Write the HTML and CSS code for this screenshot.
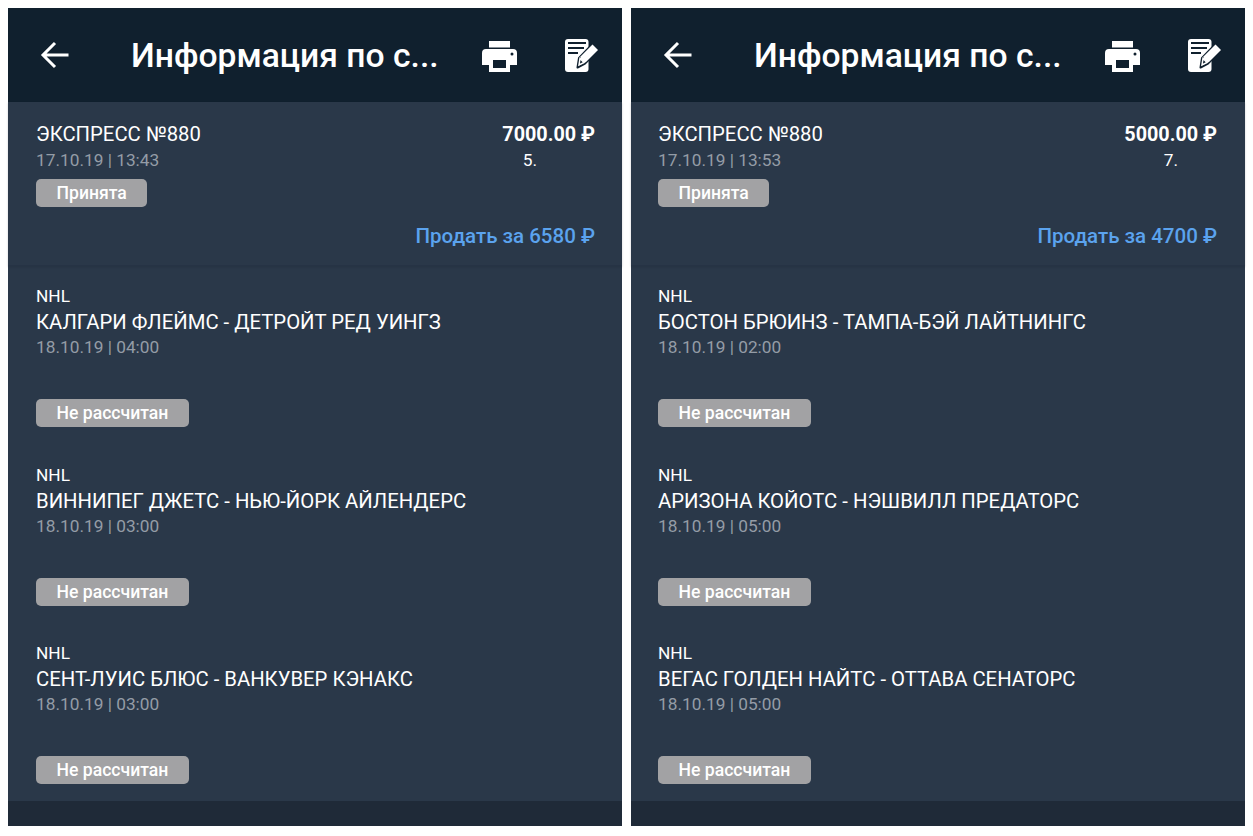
FILE: index.html
```html
<!DOCTYPE html>
<html lang="ru">
<head>
<meta charset="utf-8">
<title>Информация по ставке</title>
<link rel="stylesheet" href="styles.css">
</head>
<body>
<svg class="defs" width="0" height="0" aria-hidden="true">
  <symbol id="i-back" viewBox="0 0 30 28"><path d="M28.500 14H3M15 2 3 14l12 12" fill="none" stroke="#fff" stroke-width="3"/></symbol>
  <symbol id="i-print" viewBox="0 0 35 32"><path d="M7 1h21v6.500H7z" fill="#fff"/><path fill="#fff" fill-rule="evenodd" d="M4 9h27a4 4 0 0 1 4 4v12h-7v7H7v-7H0V13a4 4 0 0 1 4-4Zm7 11v8h13v-8Zm19-7.500a1.500 1.500 0 1 0 0 3 1.500 1.500 0 0 0 0-3Z"/></symbol>
  <symbol id="i-note" viewBox="0 0 34 34"><rect width="23.500" height="33" rx="3" fill="#fff"/><path stroke="#10202e" stroke-width="2" d="M3 4h18M3 9h16M3 14h10" fill="none"/><path d="M27.500 5 33.500 11 20 24.500 12.500 28.500l1.500-9.500Z" fill="#fff" stroke="#10202e" stroke-width="2" stroke-linejoin="round"/><path d="M27.500 5.500 33 11 20.500 23.500 15 18Z" fill="#fff"/><path d="M15 19.500 19 23.500 14 26Z" fill="#10202e" stroke="#fff" stroke-width="1.500"/></symbol>
</svg>
<main class="screens">
  <section class="panel panel-a">
    <header class="bar">
      <svg class="back"><use href="#i-back"/></svg>
      <h1 class="title">Информация по с...</h1>
      <svg class="print"><use href="#i-print"/></svg>
      <svg class="note"><use href="#i-note"/></svg>
    </header>
    <div class="summary">
      <div class="summary-top">
        <div class="summary-left">
          <div class="name">ЭКСПРЕСС №880</div>
          <div class="date">17.10.19 | 13:43</div>
          <span class="chip">Принята</span>
        </div>
        <div class="summary-right">
          <div class="amount">7000.00 ₽</div>
          <div class="coef">5.</div>
        </div>
      </div>
      <div class="sell">Продать за 6580 ₽</div>
    </div>
    <div class="events">
      <article class="event">
        <div class="league">NHL</div>
        <div class="name">КАЛГАРИ ФЛЕЙМС - ДЕТРОЙТ РЕД УИНГЗ</div>
        <div class="date">18.10.19 | 04:00</div>
        <span class="chip">Не рассчитан</span>
      </article>
      <article class="event">
        <div class="league">NHL</div>
        <div class="name">ВИННИПЕГ ДЖЕТС - НЬЮ-ЙОРК АЙЛЕНДЕРС</div>
        <div class="date">18.10.19 | 03:00</div>
        <span class="chip">Не рассчитан</span>
      </article>
      <article class="event">
        <div class="league">NHL</div>
        <div class="name">СЕНТ-ЛУИС БЛЮС - ВАНКУВЕР КЭНАКС</div>
        <div class="date">18.10.19 | 03:00</div>
        <span class="chip">Не рассчитан</span>
      </article>
    </div>
    <div class="foot"></div>
  </section>
  <section class="panel panel-b">
    <header class="bar">
      <svg class="back"><use href="#i-back"/></svg>
      <h1 class="title">Информация по с...</h1>
      <svg class="print"><use href="#i-print"/></svg>
      <svg class="note"><use href="#i-note"/></svg>
    </header>
    <div class="summary">
      <div class="summary-top">
        <div class="summary-left">
          <div class="name">ЭКСПРЕСС №880</div>
          <div class="date">17.10.19 | 13:53</div>
          <span class="chip">Принята</span>
        </div>
        <div class="summary-right">
          <div class="amount">5000.00 ₽</div>
          <div class="coef">7.</div>
        </div>
      </div>
      <div class="sell">Продать за 4700 ₽</div>
    </div>
    <div class="events">
      <article class="event">
        <div class="league">NHL</div>
        <div class="name">БОСТОН БРЮИНЗ - ТАМПА-БЭЙ ЛАЙТНИНГС</div>
        <div class="date">18.10.19 | 02:00</div>
        <span class="chip">Не рассчитан</span>
      </article>
      <article class="event">
        <div class="league">NHL</div>
        <div class="name">АРИЗОНА КОЙОТС - НЭШВИЛЛ ПРЕДАТОРС</div>
        <div class="date">18.10.19 | 05:00</div>
        <span class="chip">Не рассчитан</span>
      </article>
      <article class="event">
        <div class="league">NHL</div>
        <div class="name">ВЕГАС ГОЛДЕН НАЙТС - ОТТАВА СЕНАТОРС</div>
        <div class="date">18.10.19 | 05:00</div>
        <span class="chip">Не рассчитан</span>
      </article>
    </div>
    <div class="foot"></div>
  </section>
</main>
</body>
</html>
```
FILE: styles.css
```css
* { box-sizing: border-box; }
html, body { margin: 0; height: 100%; background: #fff; overflow: hidden; }
body { padding: 8px 8px 0 8px; font-family: Roboto, "Noto Sans", sans-serif; color: #fff; }
.defs { display: block; height: 0; }
.screens { display: grid; grid-template-columns: 614px 614px; column-gap: 9px; }
.panel { height: 818px; display: flex; flex-direction: column; background: #2a3849; }
.bar { height: 94px; flex: none; display: flex; align-items: center; background: #10202e; padding: 0 23px 0 32px; }
.back { width: 30px; height: 28px; flex: none; }
.title { margin: 2px 0 0 61px; flex: 1; font-size: 33.650px; font-weight: 500; white-space: nowrap; line-height: 40px; }
.print { width: 35px; height: 32px; flex: none; margin-right: 48px; margin-top: 2px; }
.note { width: 34px; height: 34px; flex: none; margin-top: 1px; }
.summary { height: 164px; flex: none; padding: 20px 27px 0 28px; border-bottom: 1px solid #263345; box-shadow: 0 1px 2px rgba(20,30,40,.2); }
.panel-b .summary { padding-left: 27px; padding-right: 28px; }
.summary-top { display: flex; justify-content: space-between; height: 97px; }
.summary-left { display: flex; flex-direction: column; align-items: flex-start; }
.summary-right { display: flex; flex-direction: column; align-items: flex-end; }
.name { font-size: 20.300px; line-height: 24px; white-space: nowrap; }
.date { font-size: 17.300px; line-height: 22px; margin-top: 3px; color: #949ca6; }
.chip { display: inline-block; height: 28px; line-height: 28px; padding: 0 20.500px; border-radius: 5px; background: #a2a2a4; color: #fff; font-size: 17.600px; font-weight: 500; white-space: nowrap; }
.summary .chip { margin-top: 8px; }
.amount { font-size: 19.800px; line-height: 26px; font-weight: 700; white-space: nowrap; }
.coef { font-size: 17.300px; line-height: 22px; margin-top: 1px; }
.panel-a .coef { margin-right: 58px; }
.panel-b .coef { margin-right: 39px; }
.sell { text-align: right; font-size: 20.500px; line-height: 24px; font-weight: 500; color: #5ba3ee; margin-top: 5px; }
.events { flex: 1; min-height: 0; padding: 19px 28px 0; }
.panel-b .events { padding-left: 27px; }
.event { height: 178.500px; }
.event:last-child { height: auto; }
.league { font-size: 17.300px; line-height: 22px; }
.event .name { margin-top: 3px; }
.event .date { margin-top: 2px; }
.event .chip { margin-top: 41px; }
.foot { height: 25px; flex: none; background: #1f2a38; }
```
